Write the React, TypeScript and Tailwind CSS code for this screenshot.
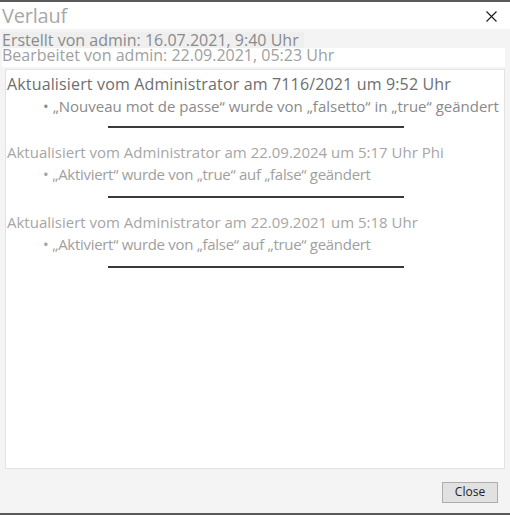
interface Entry {
  heading: string;
  change: string;
  strong?: boolean;
}

const entries: Entry[] = [
  {
    heading: "Aktualisiert vom Administrator am 7116/2021 um 9:52 Uhr",
    change: "„Nouveau mot de passe“ wurde von „falsetto“ in „true“ geändert",
    strong: true,
  },
  {
    heading: "Aktualisiert vom Administrator am 22.09.2024 um 5:17 Uhr Phi",
    change: "„Aktiviert“ wurde von „true“ auf „false“ geändert",
  },
  {
    heading: "Aktualisiert vom Administrator am 22.09.2021 um 5:18 Uhr",
    change: "„Aktiviert“ wurde von „false“ auf „true“ geändert",
  },
];

export default function App() {
  return (
    <div
      className="w-[510px] h-[515px] flex flex-col bg-[#f4f4f4] border-t-2 border-b-2 border-[#5a5a5a] overflow-hidden"
      style={{ fontFamily: '"Open Sans", "Noto Sans", sans-serif' }}
    >
      {/* Title bar */}
      <div className="h-[27px] bg-white flex items-center justify-between pl-[2px] pr-[13px]">
        <h1 className="text-[20px] leading-none text-[#a8a8a8] tracking-[-0.2px]">Verlauf</h1>
        <svg width="11" height="11" viewBox="0 0 11 11" className="mt-[2px]">
          <path d="M0.5 0.5 L10.5 10.5 M10.5 0.5 L0.5 10.5" stroke="#1a1a1a" strokeWidth="1.1" />
        </svg>
      </div>

      {/* Meta info */}
      <div className="flex flex-col pt-[3px] pl-[2px] pr-[5px] text-[16px] leading-[15px]">
        <p className="text-[#8a8a8a] bg-[#efefef] w-fit pr-[5px] pt-[1px]">Erstellt von admin: 16.07.2021, 9:40 Uhr</p>
        <p className="text-[#a0a0a0] bg-white pb-[4px]">Bearbeitet von admin: 22.09.2021, 05:23 Uhr</p>
      </div>

      {/* History list */}
      <div className="mx-[5px] mt-[2px] h-[400px] bg-white border border-[#e3e3e3] flex flex-col pt-[4px]">
        {entries.map((e, i) => (
          <div key={i} className="flex flex-col pb-[14px]">
            <p
              className={
                e.strong
                  ? "pl-[1px] text-[16px] leading-[20px] text-[#6e6e6e] tracking-[0.15px]"
                  : "pl-[1px] text-[15px] leading-[20px] text-[#a6a6a6]"
              }
            >
              {e.heading}
            </p>
            <p
              className={
                e.strong
                  ? "pl-[37px] mt-[2px] text-[15px] leading-[20px] text-[#8a8a8a]"
                  : "pl-[37px] mt-[2px] text-[15px] leading-[20px] text-[#a0a0a0] tracking-[-0.3px]"
              }
            >
              <span className="mr-[4px]">•</span>
              {e.change}
            </p>
            <div
              className={
                e.strong
                  ? "ml-[102px] mt-[10px] w-[296px] h-[2px] bg-[#3a3a3a]"
                  : "ml-[102px] mt-[12px] w-[296px] h-[2px] bg-[#3a3a3a]"
              }
            />
          </div>
        ))}
      </div>

      {/* Footer */}
      <div className="flex-1 flex items-center justify-end pr-[12px] pt-[2px]">
        <button className="w-[56px] h-[21px] bg-[#e1e1e1] border border-[#adadad] text-[12px] text-[#222] leading-none">
          Close
        </button>
      </div>
    </div>
  );
}
